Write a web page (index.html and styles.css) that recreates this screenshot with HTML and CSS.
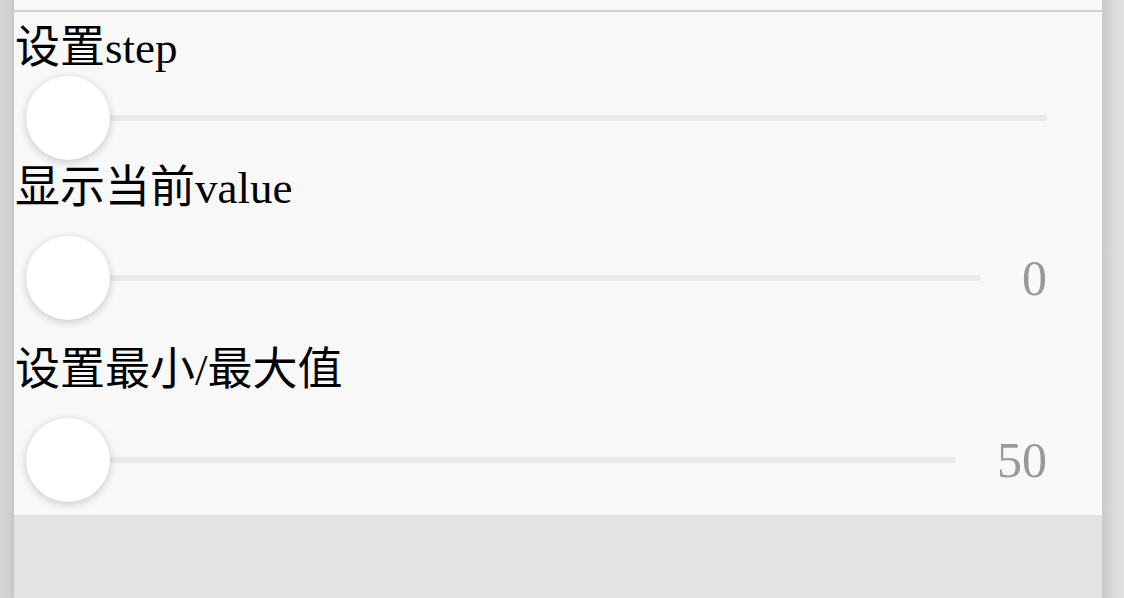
FILE: index.html
```html
<!DOCTYPE html>
<html lang="zh">
<head>
<meta charset="utf-8">
<link rel="stylesheet" href="styles.css">
</head>
<body>
<div class="page">
  <div class="edge-left"></div>
  <main class="main">
    <div class="topbar"></div>
    <section class="panel">
      <div class="label">设置step</div>
      <div class="slider">
        <div class="track"><div class="thumb"></div></div>
      </div>
      <div class="label">显示当前value</div>
      <div class="slider spaced">
        <div class="track"><div class="thumb"></div></div>
        <div class="value">0</div>
      </div>
      <div class="label">设置最小/最大值</div>
      <div class="slider spaced last">
        <div class="track"><div class="thumb"></div></div>
        <div class="value">50</div>
      </div>
    </section>
    <div class="footer"></div>
  </main>
  <div class="edge-right"></div>
</div>
</body>
</html>
```
FILE: styles.css
```css
html, body {
  margin: 0;
  padding: 0;
  height: 100%;
}
body {
  font-family: "Liberation Serif", "Noto Sans CJK SC", serif;
  color: #000;
  background: #e3e3e3;
}
.page {
  display: flex;
  height: 598px;
  overflow: hidden;
}
.edge-left {
  width: 14px;
  flex: none;
  background: linear-gradient(to right, #d6d6d6 0%, #d2d2d2 60%, #c6c6c6 100%);
}
.edge-right {
  width: 22px;
  flex: none;
  background: linear-gradient(to right, #c8c8c8 0%, #d6d6d6 40%, #e2e2e2 100%);
}
.main {
  flex: 1;
  display: flex;
  flex-direction: column;
  background: #e3e3e3;
}
.topbar {
  height: 10px;
  background: #f8f8f8;
  border-bottom: 2px solid #d0d0d0;
}
.panel {
  background: #f8f8f8;
  padding-top: 11px;
}
.label {
  font-size: 45px;
  line-height: 50px;
  height: 50px;
  padding-left: 1px;
  white-space: nowrap;
}
.slider {
  display: flex;
  align-items: center;
  height: 90px;
  padding: 0 55px 0 12px;
}
.slider.spaced {
  padding-top: 20px;
  padding-bottom: 22px;
}
.slider.last {
  padding-bottom: 10px;
}
.track {
  position: relative;
  flex: 1;
  height: 6px;
  border-radius: 3px;
  background: #e9e9e9;
}
.thumb {
  position: absolute;
  left: 0;
  top: 50%;
  width: 84px;
  height: 84px;
  margin-top: -42px;
  border-radius: 50%;
  background: #fff;
  box-shadow: 0 2px 8px rgba(0, 0, 0, 0.2);
}
.value {
  margin-left: 41px;
  font-size: 50px;
  line-height: 50px;
  color: #999;
}
.footer {
  flex: 1;
  background: #e3e3e3;
}
```
